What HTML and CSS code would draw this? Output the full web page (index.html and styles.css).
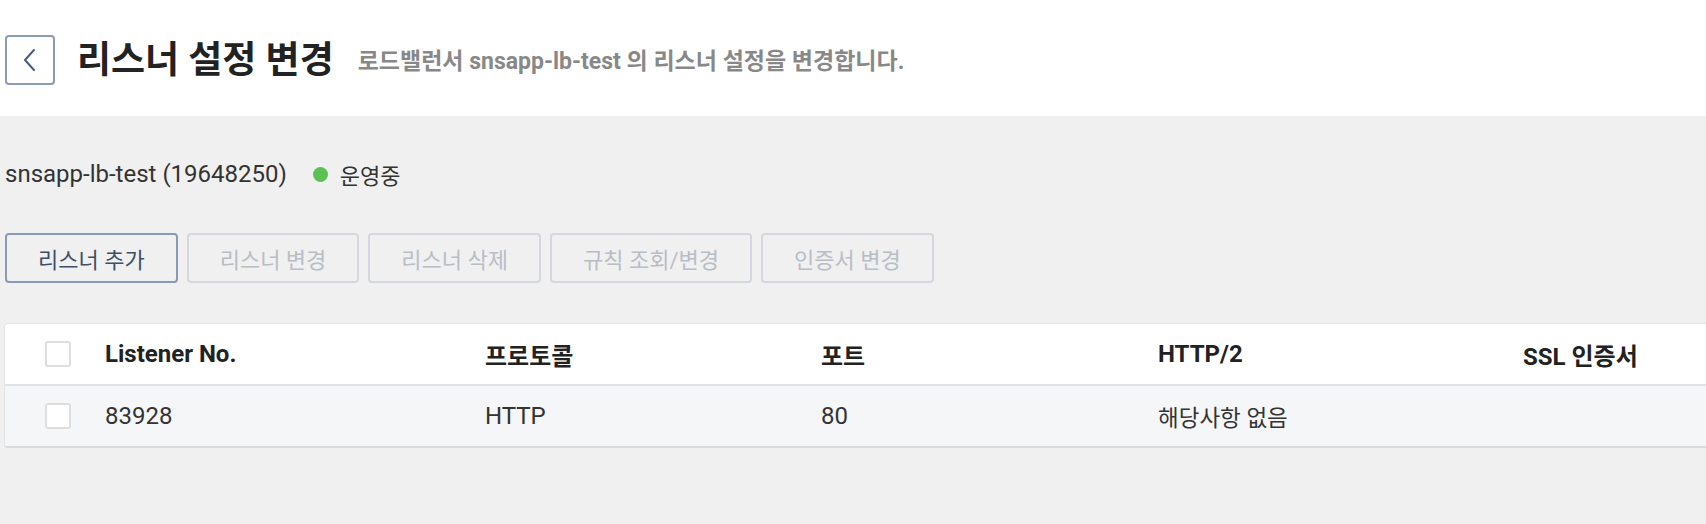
FILE: index.html
```html
<!DOCTYPE html>
<html lang="ko">
  <head>
    <meta charset="UTF-8">
    <meta name="viewport" content="width=device-width, initial-scale=1.0">
    <title>리스너 설정 변경</title>
    <link rel="stylesheet" href="styles.css">
  </head>
  <body>
    <header class="page-header">
      <button class="back-btn" type="button" aria-label="뒤로">
        <svg width="14" height="24" viewBox="0 0 14 24">
          <polyline points="11,2 2,12 11,22" fill="none" stroke="#4a5d7b" stroke-width="2" stroke-linecap="round" stroke-linejoin="round"/>
        </svg>
      </button>
      <h1 class="page-title">리스너 설정 변경</h1>
      <p class="page-desc">로드밸런서 snsapp-lb-test 의 리스너 설정을 변경합니다.</p>
    </header>

    <main class="content">
      <div class="lb-status">
        <span class="lb-name">snsapp-lb-test (19648250)</span>
        <span class="status-dot"></span>
        <span class="status-text">운영중</span>
      </div>

      <div class="toolbar">
        <button class="btn" type="button">리스너 추가</button>
        <button class="btn" type="button" disabled>리스너 변경</button>
        <button class="btn" type="button" disabled>리스너 삭제</button>
        <button class="btn" type="button" disabled>규칙 조회/변경</button>
        <button class="btn" type="button" disabled>인증서 변경</button>
      </div>

      <div class="list-card">
        <table class="listener-table">
          <colgroup>
            <col class="col-check">
            <col class="col-no">
            <col class="col-protocol">
            <col class="col-port">
            <col class="col-http2">
            <col>
          </colgroup>
          <thead>
            <tr>
              <th><span class="checkbox"></span></th>
              <th>Listener No.</th>
              <th>프로토콜</th>
              <th>포트</th>
              <th>HTTP/2</th>
              <th>SSL 인증서</th>
            </tr>
          </thead>
          <tbody>
            <tr>
              <td><span class="checkbox"></span></td>
              <td class="latin">83928</td>
              <td class="latin">HTTP</td>
              <td class="latin">80</td>
              <td>해당사항 없음</td>
              <td></td>
            </tr>
          </tbody>
        </table>
      </div>
    </main>
  </body>
</html>
```

FILE: styles.css
```css
/* 기본 */
body {
    margin: 0;
    background-color: #f0f0f0;
    font-family: Roboto, "Noto Sans CJK KR", sans-serif;
    color: #333;
    overflow: hidden;
}

/* 상단 헤더 */
.page-header {
    display: flex;
    align-items: center;
    height: 50px;
    padding: 35px 5px 31px;
    background: #fff;
}

.back-btn {
    display: flex;
    align-items: center;
    justify-content: center;
    width: 50px;
    height: 50px;
    padding: 0;
    border: 2px solid #8a9bb4;
    border-radius: 4px;
    background: #fff;
    cursor: pointer;
}

.page-title {
    margin: 0 24px 0 22px;
    font-size: 37px;
    font-weight: 700;
    color: #222;
    line-height: 1;
}

.page-desc {
    margin: 0 0 2px;
    font-size: 23px;
    font-weight: 700;
    color: #888;
}

/* 본문 */
.content {
    padding: 0 4px;
}

.lb-status {
    display: flex;
    align-items: center;
    height: 28px;
    margin-top: 44px;
    padding-left: 1px;
}

.lb-name {
    font-size: 24px;
}

.status-dot {
    width: 15px;
    height: 15px;
    margin: 0 12px 0 26px;
    border-radius: 50%;
    background: #5ac152;
}

.status-text {
    font-size: 22px;
}

/* 버튼 */
.toolbar {
    display: flex;
    gap: 9px;
    margin-top: 45px;
    padding-left: 1px;
}

.btn {
    height: 50px;
    padding: 0 31px;
    border: 2px solid #8a9ab3;
    border-radius: 4px;
    background: transparent;
    font-family: inherit;
    font-size: 22px;
    color: #3d4e68;
    cursor: pointer;
}

.btn:disabled {
    border-color: #d4d8de;
    color: #b8bdc6;
    cursor: default;
}

/* 리스너 목록 */
.list-card {
    width: 1960px;
    margin-top: 40px;
    background: #fff;
    border: 1px solid #e4e4e4;
    border-bottom: 2px solid #dadada;
    border-radius: 4px;
    overflow: hidden;
}

.listener-table {
    width: 100%;
    border-collapse: collapse;
    table-layout: fixed;
}

.col-check { width: 100px; }
.col-no { width: 380px; }
.col-protocol { width: 336px; }
.col-port { width: 337px; }
.col-http2 { width: 365px; }

.listener-table th,
.listener-table td {
    height: 60px;
    padding: 0;
    text-align: left;
}

.listener-table th {
    font-size: 24px;
    font-weight: 700;
    color: #222;
    border-bottom: 2px solid #e0e2e6;
}

.listener-table td {
    font-size: 22.5px;
    background: #f5f6f8;
}

.listener-table td.latin {
    font-size: 24px;
}

.listener-table th:first-child,
.listener-table td:first-child {
    padding-left: 40px;
}

.checkbox {
    display: block;
    width: 22px;
    height: 22px;
    border: 2px solid #dedede;
    border-radius: 3px;
    background: #fff;
}
```
